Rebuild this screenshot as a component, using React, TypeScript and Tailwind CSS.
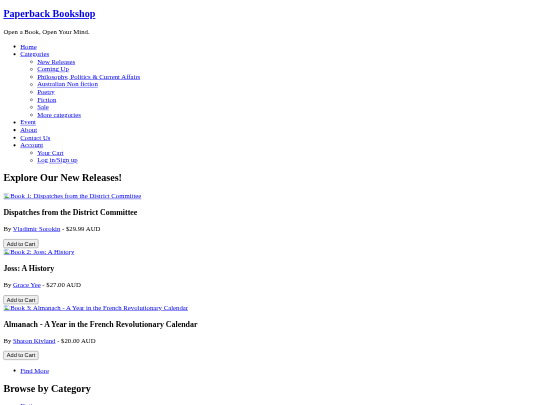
const link = 'text-[#0000ee] underline';

function Broken({ label }: { label: string }) {
    return (
        <a href="#" className={link}>
            <svg className="inline-block align-[-3px]" width="16" height="16" viewBox="0 0 16 16">
                <path d="M1 1h10l4 4v9H1z" fill="#fff" stroke="#a0a0a0" />
                <path d="M2 2h8v5H2z" fill="#a9c1f2" />
                <path d="M2 13l4-6 3 3 2-1 3 4z" fill="#4fa646" />
                <path d="M0 15h16" stroke="#0000ee" />
            </svg>
            {label}
        </a>
    );
}

function Book({ n, title, author, price }: { n: number; title: string; author: string; price: string }) {
    return (
        <div>
            <Broken label={`Book ${n}: ${title}`} />
            <h3 className="text-[18.72px] leading-[22px] font-bold my-[18.72px]">{title}</h3>
            <p className="my-4">
                By <a href="#" className={link}>{author}</a> - {price}
            </p>
            <button className="block font-['Liberation_Sans',sans-serif] text-[13.33px] leading-[15px] px-[7px] py-[2px] bg-[#efefef] border border-[#767676] rounded-[3px] text-black">
                Add to Cart
            </button>
        </div>
    );
}

function Item({ children, sub }: { children: string; sub?: string[] }) {
    return (
        <li>
            <a href="#" className={link}>{children}</a>
            {sub && (
                <ul className="list-[circle] pl-10">
                    {sub.map((s) => (
                        <li key={s}><a href="#" className={link}>{s}</a></li>
                    ))}
                </ul>
            )}
        </li>
    );
}

export default function App() {
    return (
        <div className="h-[405px] w-[540px] overflow-hidden bg-white">
            <div className="w-[1280px] px-2 pt-[20px] text-black text-[16px] leading-[18px] font-['Liberation_Serif',serif] origin-top-left scale-[0.421875] blur-[1px]">
                <h2 className="text-[24px] leading-[27px] font-bold mt-0 mb-[20px]">
                    <a href="#" className={link}>Paperback Bookshop</a>
                </h2>
                <p className="my-4">Open a Book, Open Your Mind.</p>
                <ul className="list-disc pl-10 my-4">
                    <Item>Home</Item>
                    <Item sub={['New Releases', 'Coming Up', 'Philosophy, Politics & Current Affairs', 'Australian Non fiction', 'Poetry', 'Fiction', 'Sale', 'More categories']}>Categories</Item>
                    <Item>Event</Item>
                    <Item>About</Item>
                    <Item>Contact Us</Item>
                    <Item sub={['Your Cart', 'Log in/Sign up']}>Account</Item>
                </ul>
                <h2 className="text-[24px] leading-[27px] font-bold my-[20px]">Explore Our New Releases!</h2>
                <Book n={1} title="Dispatches from the District Committee" author="Vladimir Sorokin" price="$29.99 AUD" />
                <Book n={2} title="Joss: A History" author="Grace Yee" price="$27.00 AUD" />
                <Book n={3} title="Almanach - A Year in the French Revolutionary Calendar" author="Sharon Kivland" price="$20.00 AUD" />
                <ul className="list-disc pl-10 my-4">
                    <Item>Find More</Item>
                </ul>
                <h2 className="text-[24px] leading-[27px] font-bold my-[20px]">Browse by Category</h2>
                <ul className="list-disc pl-10 my-4">
                    <Item>Fiction</Item>
                    <Item>Poetry</Item>
                </ul>
            </div>
        </div>
    );
}
